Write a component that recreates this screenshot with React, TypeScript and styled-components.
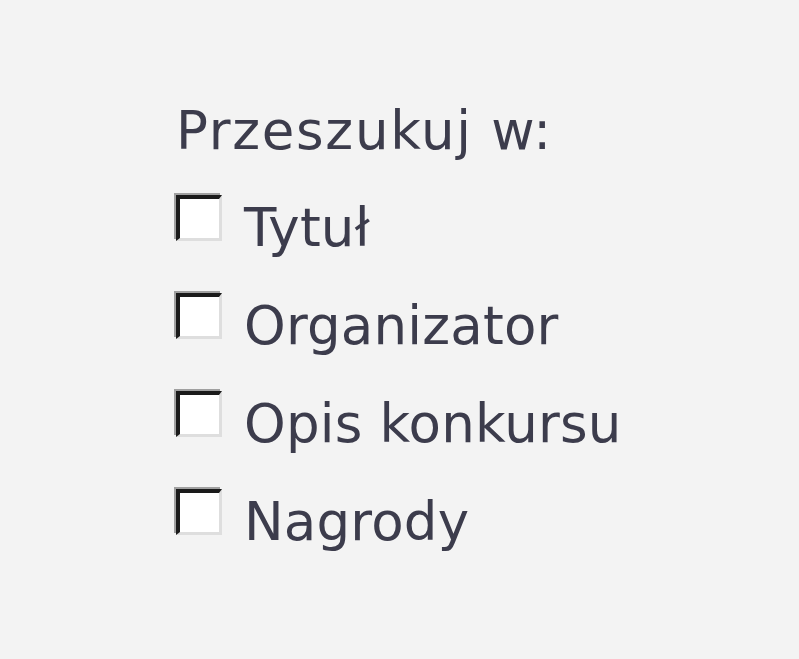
import React from 'react'
import styled, { createGlobalStyle } from 'styled-components'

const GlobalStyle = createGlobalStyle`
  html, body { margin: 0; padding: 0; background: #f3f3f3; }
  body { font-family: "DejaVu Sans", Verdana, sans-serif; }
`

const fields = ['Tytuł', 'Organizator', 'Opis konkursu', 'Nagrody']

const Panel = styled.div`
  width: 799px;
  height: 659px;
  box-sizing: border-box;
  padding: 83px 0 0 176px;
  display: flex;
  flex-direction: column;
  color: #3c3c4c;
  font-size: 53px;
`

const Title = styled.div`
  line-height: 96px;
  letter-spacing: 1.7px;
`

const Row = styled.label`
  display: flex;
  align-items: flex-start;
  gap: 22px;
  line-height: 98px;
  letter-spacing: 0.2px;
`

const Box = styled.span`
  flex: none;
  width: 46px;
  height: 46px;
  margin-top: 16px;
  box-sizing: border-box;
  background: #fff;
  border-top: 4px solid #1a1a1a;
  border-left: 4px solid #1a1a1a;
  border-right: 3px solid #dedede;
  border-bottom: 3px solid #dedede;
  box-shadow: -2px -2px 0 #a0a0a0;
`

const Label = styled.span``

const App = () => (
  <>
    <GlobalStyle />
    <Panel>
      <Title>Przeszukuj w:</Title>
      {fields.map(f => (
        <Row key={f}>
          <Box />
          <Label>{f}</Label>
        </Row>
      ))}
    </Panel>
  </>
)

export default App
